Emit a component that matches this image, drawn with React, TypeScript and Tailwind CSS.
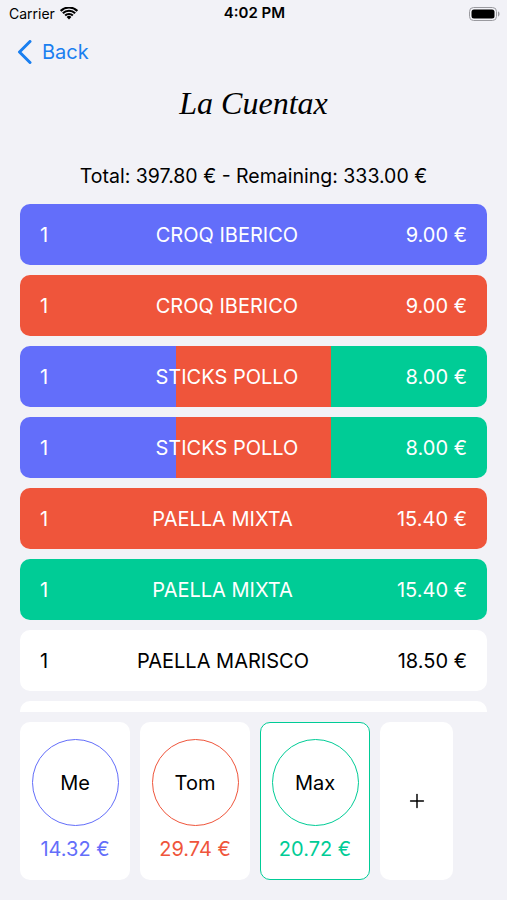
import { Plus } from 'lucide-react';

const BLUE = '#636efa';
const RED = '#ef553b';
const GREEN = '#00cc96';

type Item = { qty?: number; name?: string; price?: string; split: string[] };

const ITEMS: Item[] = [
  { qty: 1, name: 'CROQ IBERICO', price: '9.00 €', split: [BLUE] },
  { qty: 1, name: 'CROQ IBERICO', price: '9.00 €', split: [RED] },
  { qty: 1, name: 'STICKS POLLO', price: '8.00 €', split: [BLUE, RED, GREEN] },
  { qty: 1, name: 'STICKS POLLO', price: '8.00 €', split: [BLUE, RED, GREEN] },
  { qty: 1, name: 'PAELLA MIXTA', price: '15.40 €', split: [RED] },
  { qty: 1, name: 'PAELLA MIXTA', price: '15.40 €', split: [GREEN] },
  { qty: 1, name: 'PAELLA MARISCO', price: '18.50 €', split: [] },
  // next row is scrolled out of view, only its top edge shows
  { split: [] },
];

const PEOPLE = [
  { name: 'Me', amount: '14.32 €', ring: 'border-[#636efa]', text: 'text-[#636efa]', selected: false },
  { name: 'Tom', amount: '29.74 €', ring: 'border-[#ef553b]', text: 'text-[#ef553b]', selected: false },
  { name: 'Max', amount: '20.72 €', ring: 'border-[#00cc96]', text: 'text-[#00cc96]', selected: true },
];

function StatusBar() {
  return (
    <div className="grid h-[27px] grid-cols-3 items-center pl-[9px] pr-[7px] text-[14px] text-black">
      <div className="flex items-center gap-[5px]">
        <span>Carrier</span>
        <svg width="18" height="13" viewBox="0 0 18 13">
          <path d="M9 12.5 6.6 10a3.4 3.4 0 0 1 4.8 0Z" fill="#000" />
          <path d="M4.4 7.8a6.5 6.5 0 0 1 9.2 0l-1.5 1.5a4.4 4.4 0 0 0-6.2 0Z" fill="#000" />
          <path d="M2.1 5.5a9.8 9.8 0 0 1 13.8 0l-1.5 1.5a7.7 7.7 0 0 0-10.8 0Z" fill="#000" />
          <path d="M-.1 3.2a13 13 0 0 1 18.2 0L16.6 4.7a10.9 10.9 0 0 0-15.2 0Z" fill="#000" />
        </svg>
      </div>
      <div className="text-center text-[15px] font-semibold">4:02 PM</div>
      <div className="flex justify-end">
        <svg width="31" height="14" viewBox="0 0 31 14">
          <rect x="0.5" y="0.5" width="27" height="13" rx="4" fill="none" stroke="#9a9a9f" />
          <rect x="2.5" y="2.5" width="23" height="9" rx="2.5" fill="#000" />
          <path d="M29 4.5c1 .3 1.5 1.2 1.5 2.5s-.5 2.2-1.5 2.5Z" fill="#9a9a9f" />
        </svg>
      </div>
    </div>
  );
}

function ItemRow({ item }: { item: Item }) {
  const plain = item.split.length === 0;
  return (
    <div className="grid h-[61px] shrink-0 overflow-hidden rounded-[10px]">
      <div className="col-start-1 row-start-1 flex">
        {plain ? (
          <div className="flex-1 bg-white" />
        ) : (
          item.split.map((c, i) => <div key={i} className="flex-1" style={{ backgroundColor: c }} />)
        )}
      </div>
      <div
        className={`col-start-1 row-start-1 flex items-center justify-between px-[20px] text-[20px] ${
          plain ? 'text-black' : 'text-white'
        }`}
      >
        <span>{item.qty}</span>
        <span>{item.name}</span>
        <span>{item.price}</span>
      </div>
    </div>
  );
}

export default function App() {
  return (
    <div className="flex h-[900px] w-[507px] flex-col overflow-hidden bg-[#f2f2f7] font-['Inter',sans-serif]">
      <StatusBar />
      <div className="flex h-[50px] items-center pl-[17px] text-[#1a7ff0]">
        <svg width="16" height="24" viewBox="0 0 16 24" fill="none">
          <path d="M13 1.5 2.5 12 13 22.5" stroke="currentColor" strokeWidth="3" strokeLinecap="round" strokeLinejoin="round" />
        </svg>
        <span className="ml-[9px] text-[20px]">Back</span>
      </div>
      <div className="flex h-[52px] items-center justify-center">
        <h1 className="font-['Liberation_Serif',serif] text-[32px] italic text-black">La Cuentax</h1>
      </div>
      <div className="mt-[33px] flex h-[30px] items-center justify-center text-[19.5px] text-black">
        Total: 397.80 € - Remaining: 333.00 €
      </div>
      <div className="mt-[12px] flex h-[508px] flex-col gap-[10px] overflow-hidden px-[20px]">
        {ITEMS.map((item, i) => (
          <ItemRow key={i} item={item} />
        ))}
      </div>
      <div className="mt-[10px] flex gap-[10px] px-[20px]">
        {PEOPLE.map((p) => (
          <div
            key={p.name}
            className={`flex h-[158px] w-[110px] flex-col items-center rounded-[10px] border-[1.5px] bg-white pt-[16px] ${
              p.selected ? 'border-[#00cc96]' : 'border-transparent'
            }`}
          >
            <div className={`flex h-[87px] w-[87px] items-center justify-center rounded-full border-[1.5px] ${p.ring}`}>
              <span className="text-[20px] text-black">{p.name}</span>
            </div>
            <span className={`mt-[8px] text-[20px] ${p.text}`}>{p.amount}</span>
          </div>
        ))}
        <div className="flex h-[158px] w-[73px] items-center justify-center rounded-[10px] bg-white">
          <Plus size={22} strokeWidth={1.6} className="text-black" />
        </div>
      </div>
    </div>
  );
}
